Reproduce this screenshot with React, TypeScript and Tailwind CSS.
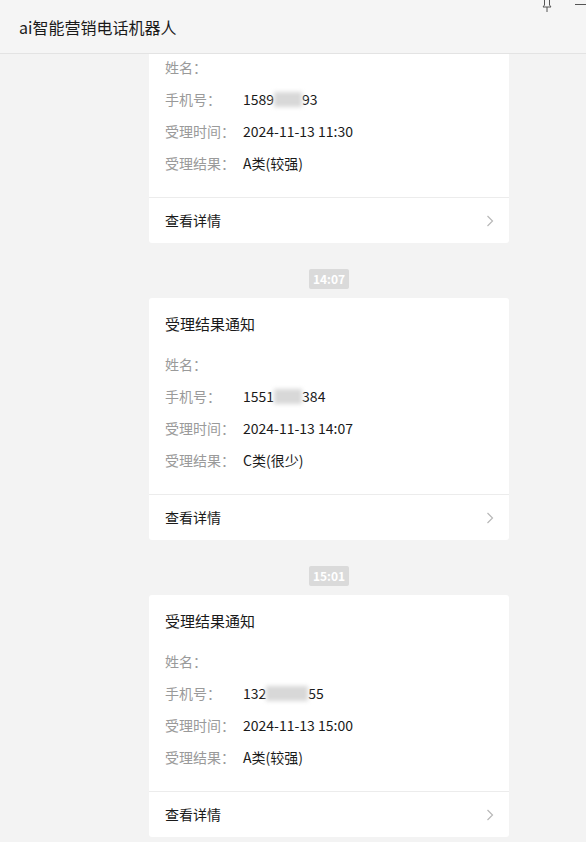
import React from "react";

const font = { fontFamily: '"Microsoft YaHei", "Noto Sans CJK SC", "Noto Sans", sans-serif' };

function Phone({ pre, post, w }: { pre: string; post: string; w: number }) {
  return (
    <span className="inline-flex items-center">
      <span>{pre}</span>
      <span className="inline-block h-[15px] bg-[#d8d8d8] blur-[2px]" style={{ width: w }} />
      <span>{post}</span>
    </span>
  );
}

function Row({ label, children }: { label: string; children?: React.ReactNode }) {
  return (
    <div className="flex h-[32px] items-center text-[14px]">
      <span className="w-[78px] text-[#9a9a9a]">{label}</span>
      <span className="text-[#1a1a1a]">{children}</span>
    </div>
  );
}

function Card({ phone, time, result, showTitle = true }: { phone: React.ReactNode; time: string; result: string; showTitle?: boolean }) {
  return (
    <div className="w-[360px] rounded-[3px] bg-white">
      <div className="px-[16px] pt-[16px] pb-[18px]">
        <div className="h-[20px] text-[15px] leading-[20px] text-[#1a1a1a]">{showTitle ? "受理结果通知" : null}</div>
        <div className="mt-[14px]">
          <Row label="姓名：" />
          <Row label="手机号：">{phone}</Row>
          <Row label="受理时间：">{time}</Row>
          <Row label="受理结果：">{result}</Row>
        </div>
      </div>
      <div className="flex h-[46px] items-center justify-between border-t border-[#ececec] pl-[16px] pr-[15px]">
        <span className="text-[14px] text-[#1a1a1a]">查看详情</span>
        <svg width="8" height="12" viewBox="0 0 8 12" fill="none">
          <path d="M1.5 1 L6.5 6 L1.5 11" stroke="#b8b8b8" strokeWidth="1.2" />
        </svg>
      </div>
    </div>
  );
}

function Chip({ t }: { t: string }) {
  return (
    <div className="mt-[26px] mb-[9px] flex h-[20px] items-center rounded-[2px] bg-[#dadada] px-[4px] text-[12px] font-bold text-white">
      {t}
    </div>
  );
}

export default function App() {
  return (
    <div className="flex h-[842px] w-[586px] flex-col overflow-hidden bg-[#f3f3f3]" style={font}>
      <div className="relative z-10 flex h-[54px] shrink-0 items-center border-b border-[#e3e3e3] bg-[#f5f5f5] pl-[19px]">
        <span className="text-[16px] text-[#1a1a1a]">ai智能营销电话机器人</span>
        <svg className="absolute left-[541px] top-0" width="12" height="12" viewBox="0 0 12 12" fill="none">
          <path d="M3.5 0 V5 L2 7 H10 L8.5 5 V0" stroke="#555" strokeWidth="1" />
          <path d="M6 7 V12" stroke="#555" strokeWidth="1" />
        </svg>
        <div className="absolute left-[575px] top-[4px] h-[1px] w-[11px] bg-[#555]" />
      </div>
      <div className="flex-1 overflow-hidden">
        <div className="-mt-[53px] ml-[149px] flex w-[360px] flex-col items-center">
          <Card showTitle={false} phone={<Phone pre="1589" post="93" w={28} />} time="2024-11-13 11:30" result="A类(较强)" />
          <Chip t="14:07" />
          <Card phone={<Phone pre="1551" post="384" w={28} />} time="2024-11-13 14:07" result="C类(很少)" />
          <Chip t="15:01" />
          <Card phone={<Phone pre="132" post="55" w={42} />} time="2024-11-13 15:00" result="A类(较强)" />
        </div>
      </div>
    </div>
  );
}
